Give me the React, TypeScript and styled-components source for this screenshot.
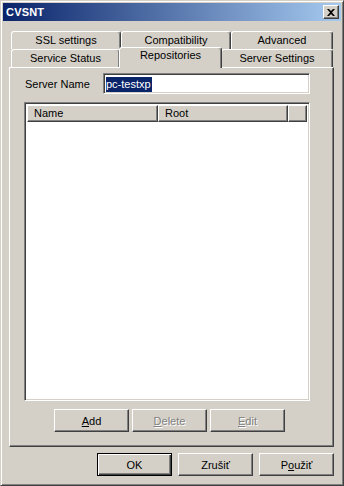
import React from "react";
import styled, { createGlobalStyle, css } from "styled-components";

const FACE = "#D4D0C8";
const LIGHT = "#FFFFFF";
const SHADOW = "#808080";
const DARK = "#404040";

const GlobalStyle = createGlobalStyle`
  html, body {
    margin: 0;
    padding: 0;
    background: ${FACE};
  }
  body {
    font-family: "Liberation Sans", Arial, sans-serif;
    font-size: 11px;
    color: #000;
  }
`;

const Window = styled.div`
  box-sizing: border-box;
  width: 344px;
  height: 486px;
  display: flex;
  flex-direction: column;
  background: ${FACE};
  border: 1px solid;
  border-color: ${FACE} ${DARK} ${DARK} ${FACE};
  box-shadow: inset 1px 1px ${LIGHT}, inset -1px -1px ${SHADOW};
  padding: 2px;
`;

const TitleBar = styled.div`
  height: 18px;
  display: flex;
  align-items: center;
  justify-content: space-between;
  background: linear-gradient(to right, #0a246a, #a6caf0);
  padding: 0 2px 0 3px;
`;

const Title = styled.span`
  color: #fff;
  font-weight: bold;
  font-size: 11px;
  letter-spacing: 0.2px;
`;

const CloseButton = styled.div`
  box-sizing: border-box;
  width: 16px;
  height: 14px;
  background: ${FACE};
  border: 1px solid;
  border-color: ${LIGHT} ${DARK} ${DARK} ${LIGHT};
  box-shadow: inset -1px -1px ${SHADOW};
  display: flex;
  align-items: center;
  justify-content: center;
  padding-right: 1px;
`;

const Body = styled.div`
  flex: 1;
  display: flex;
  flex-direction: column;
  padding: 10px 7px 7px 6px;
`;

const Tabs = styled.div`
  height: 36px;
  padding: 0 2px;
  display: flex;
  flex-direction: column;
`;

const TabRow = styled.div`
  display: flex;
  height: 18px;
`;

const Tab = styled.div<{ $w: number; $active?: boolean }>`
  box-sizing: border-box;
  flex: none;
  width: ${(p) => p.$w}px;
  height: 18px;
  background: ${FACE};
  border-top: 1px solid ${LIGHT};
  border-left: 1px solid ${LIGHT};
  border-right: 1px solid ${DARK};
  border-radius: 3px 3px 0 0;
  box-shadow: inset -1px 0 ${SHADOW};
  text-align: center;
  line-height: 16px;
  white-space: nowrap;
  ${(p) =>
    p.$active &&
    css`
      position: relative;
      z-index: 1;
      height: 21px;
      margin: -2px -1px 0 -1px;
      line-height: 15px;
    `}
`;

const Panel = styled.div`
  box-sizing: border-box;
  height: 380px;
  display: flex;
  flex-direction: column;
  border: 1px solid;
  border-color: ${LIGHT} ${DARK} ${DARK} ${LIGHT};
  box-shadow: inset -1px -1px ${SHADOW};
  padding: 5px 23px 0 14px;
`;

const FieldRow = styled.div`
  display: flex;
  align-items: center;
  height: 21px;
`;

const Label = styled.label`
  width: 79px;
  padding-left: 1px;
  box-sizing: border-box;
`;

const sunken = css`
  box-sizing: border-box;
  background: #fff;
  border: 1px solid;
  border-color: ${SHADOW} ${LIGHT} ${LIGHT} ${SHADOW};
  box-shadow: inset 1px 1px ${DARK}, inset -1px -1px ${FACE};
`;

const TextBox = styled.div`
  ${sunken};
  flex: 1;
  height: 21px;
  padding: 2px 2px 0 2px;
  display: flex;
  align-items: center;
`;

const Selection = styled.span`
  background: #0a246a;
  color: #fff;
  line-height: 15px;
  padding-right: 1px;
`;

const ListView = styled.div`
  ${sunken};
  margin-top: 8px;
  height: 299px;
  padding: 2px;
`;

const Header = styled.div`
  display: flex;
  height: 17px;
`;

const HeaderCell = styled.div<{ $w?: number }>`
  box-sizing: border-box;
  ${(p) => (p.$w ? `width: ${p.$w}px; flex: none;` : "flex: 1;")}
  height: 17px;
  background: ${FACE};
  border: 1px solid;
  border-color: ${LIGHT} ${DARK} ${DARK} ${LIGHT};
  box-shadow: inset -1px -1px ${SHADOW};
  padding-left: 6px;
  line-height: 14px;
`;

const ButtonRow = styled.div<{ $end?: boolean }>`
  display: flex;
  gap: ${(p) => (p.$end ? 6 : 3)}px;
  justify-content: ${(p) => (p.$end ? "flex-end" : "flex-start")};
  padding-left: ${(p) => (p.$end ? 0 : 30)}px;
  margin-top: ${(p) => (p.$end ? 6 : 8)}px;
`;

const Button = styled.div<{ $default?: boolean; $disabled?: boolean }>`
  box-sizing: border-box;
  width: 75px;
  height: 23px;
  background: ${FACE};
  border: 1px solid;
  border-color: ${LIGHT} ${DARK} ${DARK} ${LIGHT};
  box-shadow: inset -1px -1px ${SHADOW};
  display: flex;
  align-items: center;
  justify-content: center;
  color: ${(p) => (p.$disabled ? SHADOW : "#000")};
  text-shadow: ${(p) => (p.$disabled ? `1px 1px ${LIGHT}` : "none")};
  ${(p) =>
    p.$default &&
    css`
      border-color: #000;
      box-shadow: inset 1px 1px ${LIGHT}, inset -1px -1px ${DARK}, inset -2px -2px ${SHADOW};
    `}
`;

const backRow = [
  { label: "SSL settings", w: 110 },
  { label: "Compatibility", w: 110 },
  { label: "Advanced", w: 102 },
];

const frontRow = [
  { label: "Service Status", w: 109 },
  { label: "Repositories", w: 103, active: true },
  { label: "Server Settings", w: 112 },
];

const App = () => (
  <>
    <GlobalStyle />
    <Window>
      <TitleBar>
        <Title>CVSNT</Title>
        <CloseButton>
          <svg width="8" height="7" viewBox="0 0 8 7">
            <path d="M0 0h2l2 2 2-2h2L5 3.5 8 7H6L4 5 2 7H0l3-3.5z" fill="#000" />
          </svg>
        </CloseButton>
      </TitleBar>
      <Body>
        <Tabs>
          <TabRow>
            {backRow.map((t) => (
              <Tab key={t.label} $w={t.w}>{t.label}</Tab>
            ))}
          </TabRow>
          <TabRow>
            {frontRow.map((t) => (
              <Tab key={t.label} $w={t.w} $active={t.active}>{t.label}</Tab>
            ))}
          </TabRow>
        </Tabs>
        <Panel>
          <FieldRow>
            <Label>Server Name</Label>
            <TextBox>
              <Selection>pc-testxp</Selection>
            </TextBox>
          </FieldRow>
          <ListView>
            <Header>
              <HeaderCell $w={131}>Name</HeaderCell>
              <HeaderCell $w={130}>Root</HeaderCell>
              <HeaderCell />
            </Header>
          </ListView>
          <ButtonRow>
            <Button><span><u>A</u>dd</span></Button>
            <Button $disabled><span><u>D</u>elete</span></Button>
            <Button $disabled><span><u>E</u>dit</span></Button>
          </ButtonRow>
        </Panel>
        <ButtonRow $end>
          <Button $default>OK</Button>
          <Button>Zrušiť</Button>
          <Button><span>P<u>o</u>užiť</span></Button>
        </ButtonRow>
      </Body>
    </Window>
  </>
);

export default App;
